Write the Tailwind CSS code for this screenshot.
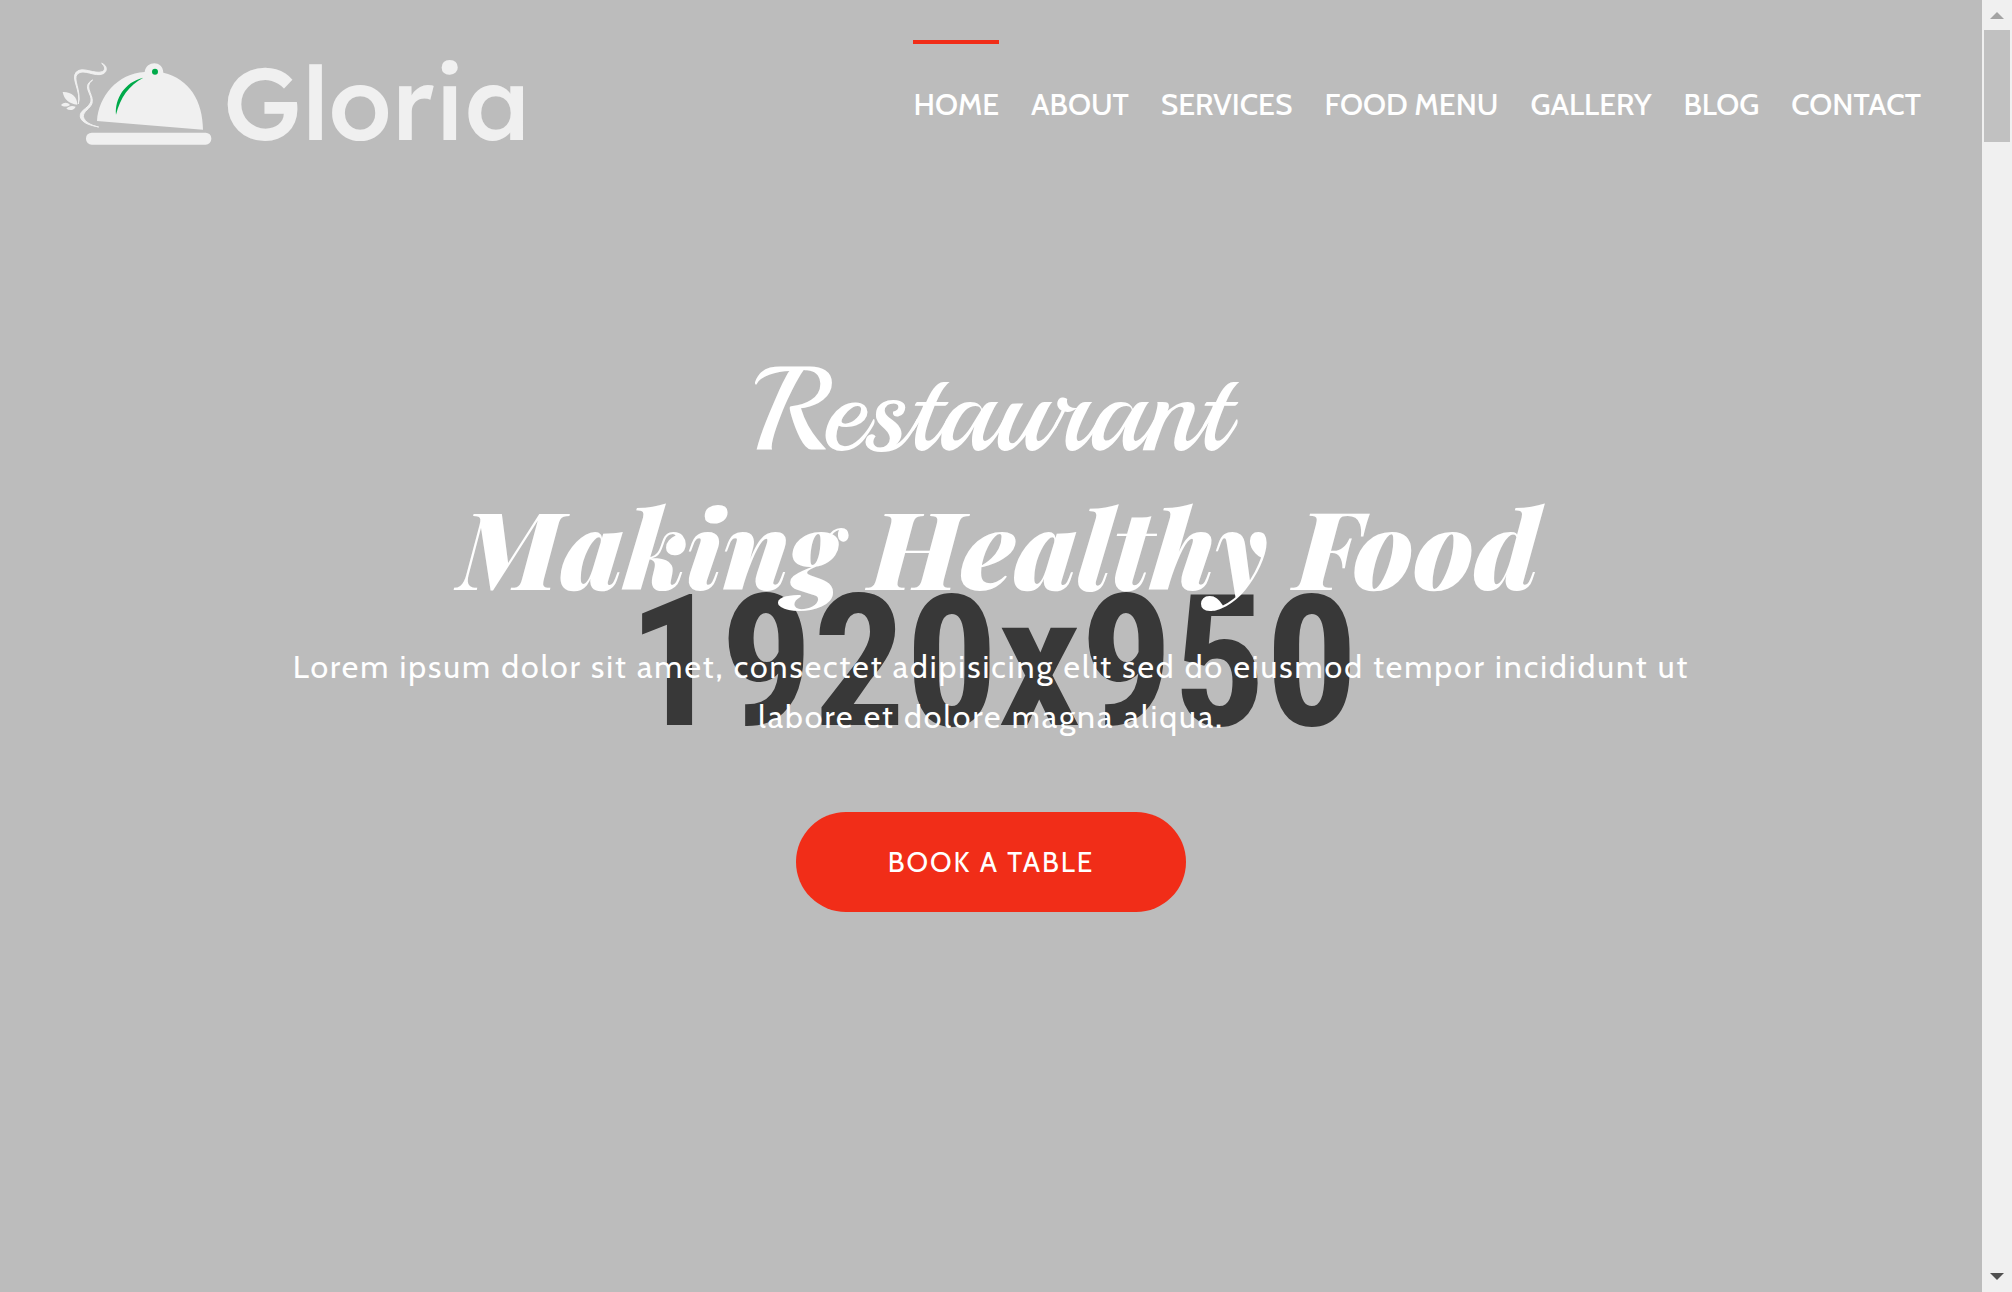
<!DOCTYPE html>
<html lang="en">
<head>
<meta charset="utf-8">
<meta name="viewport" content="width=device-width, initial-scale=1">
<title>Gloria Restaurant</title>
<script src="https://cdn.jsdelivr.net/npm/@tailwindcss/browser@4"></script>
</head>
<body class="flex h-screen overflow-hidden bg-[#bcbcbc] font-['Cabin','Lato',sans-serif] text-white">
  <div class="relative isolate flex min-w-0 flex-1 flex-col">
    <!-- Banner placeholder behind the hero text -->
    <div aria-hidden="true" class="absolute inset-0 -z-10 flex items-center justify-center pt-8 pl-1 font-['Roboto_Condensed','Roboto',sans-serif] text-[183px] leading-none font-bold text-[#383838]">1920x950</div>

    <header class="flex items-start justify-between pr-[61px] pl-[60px] pt-10">
      <a href="#" aria-label="Gloria" class="mt-5 block">
        <svg class="block h-[90px] w-[480px] overflow-visible" viewBox="0 0 480 90" fill="none">
          <g transform="translate(-20 -20) scale(.3333)">
            <path d="M171 243C176 168 232 101 314 96C317 78 330 70 343 70C356 70 369 78 370 98C448 116 489 184 489 269Z" fill="#f0f0f0"/>
            <rect x="138" y="278" width="376" height="36" rx="17" fill="#f0f0f0"/>
            <circle cx="345" cy="95" r="9" fill="#00aa4a"/>
            <path d="M228 224C224 176 254 126 310 113C268 134 240 174 228 224Z" fill="#00aa4a"/>
            <path d="M115 192C125 151 97 117 112 102C132 84 164 113 190 101C203 94 202 76 185 70C197 80 196 91 187 95C163 104 129 78 109 96C91 116 124 152 115 192Z" fill="#f0f0f0" stroke="#f0f0f0" stroke-width="3"/>
            <path d="M158 120C121 140 163 165 151 189C141 208 118 211 121 231C126 250 152 256 176 261C153 256 134 246 130 230C129 214 150 207 156 190C163 164 129 141 158 120Z" fill="#f0f0f0" stroke="#f0f0f0" stroke-width="3"/>
            <path d="M68 156C94 155 112 170 112 194C87 191 72 178 68 156ZM63 195C72 186 83 187 90 195C81 201 70 201 63 195ZM79 206C87 197 97 196 107 200C102 211 89 213 79 206Z" fill="#f0f0f0"/>
          </g>
          <text x="163" y="80" class="fill-[#f0f0f0] font-['Lexend','Lato',sans-serif] text-[102px] font-medium">Gloria</text>
        </svg>
      </a>
      <nav class="flex gap-8 text-[30px] leading-10 font-medium whitespace-nowrap">
        <a href="#" aria-current="page" class="border-t-4 border-[#f12d18] pt-[41px]">HOME</a>
        <a href="#" class="border-t-4 border-transparent pt-[41px]">ABOUT</a>
        <a href="#" class="border-t-4 border-transparent pt-[41px]">SERVICES</a>
        <a href="#" class="border-t-4 border-transparent pt-[41px]">FOOD MENU</a>
        <a href="#" class="border-t-4 border-transparent pt-[41px]">GALLERY</a>
        <a href="#" class="border-t-4 border-transparent pt-[41px]">BLOG</a>
        <a href="#" class="border-t-4 border-transparent pt-[41px]">CONTACT</a>
      </nav>
    </header>

    <main class="flex flex-col items-center px-8 pt-[197px] text-center">
      <p class="font-['Playball','Liberation_Serif',cursive] text-[120px] leading-[128px]">Restaurant</p>
      <h1 class="pl-4 font-['Playfair_Display','Liberation_Serif',serif] text-[108px] leading-[140px] font-black italic">Making Healthy Food</h1>
      <p class="mt-[27px] max-w-[1460px] text-[32px] leading-[50px] tracking-[2px]">Lorem ipsum dolor sit amet, consectet adipisicing elit sed do eiusmod tempor incididunt ut labore et dolore magna aliqua.</p>
      <a href="#" class="mt-[70px] rounded-full bg-[#f12d18] px-[92px] py-[30px] text-[28px] leading-10 tracking-[2px]">BOOK A TABLE</a>
    </main>
  </div>

  <!-- Page scrollbar -->
  <div aria-hidden="true" class="flex w-[30px] shrink-0 flex-col items-center justify-between bg-[#f0f0f0]">
    <div class="flex flex-col items-center">
      <svg class="h-[30px] w-[30px]" viewBox="0 0 30 30"><path d="M8 19L15 12L22 19Z" fill="#a3a3a3"/></svg>
      <div class="h-28 w-[26px] bg-[#c1c1c1]"></div>
    </div>
    <svg class="h-[30px] w-[30px]" viewBox="0 0 30 30"><path d="M8 11L22 11L15 18Z" fill="#505050"/></svg>
  </div>
</body>
</html>
